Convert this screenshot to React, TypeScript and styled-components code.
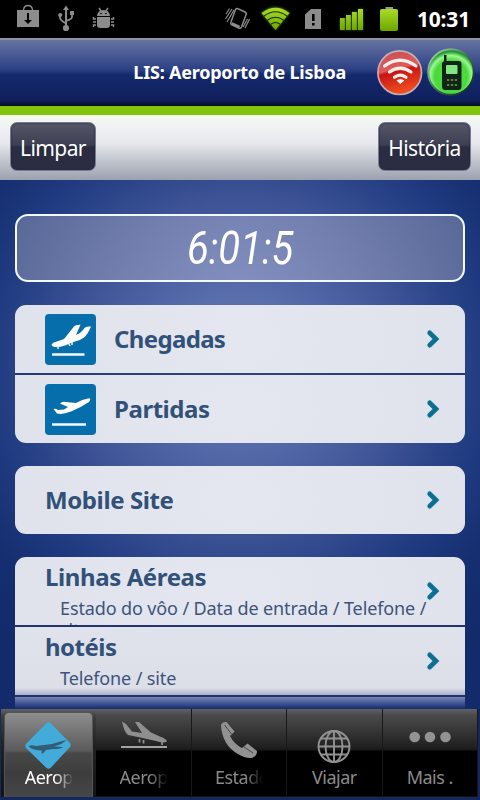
import React from "react";
import styled, { createGlobalStyle, css } from "styled-components";

const GlobalStyle = createGlobalStyle`
  * { box-sizing: border-box; }
  body { margin: 0; background: #13286a; }
`;

const Screen = styled.div`
  width: 480px;
  height: 800px;
  display: flex;
  flex-direction: column;
  overflow: hidden;
  font-family: "Noto Sans", "Open Sans", sans-serif;
  background: radial-gradient(circle at 240px 365px, #6779b5 0, #5b6fad 65px, #4e64a4 105px, #3f5597 160px, #2b4489 215px, #1f3a80 250px, #152f70 300px, #132a6b 360px);
`;

const StatusBar = styled.header`
  flex: none;
  height: 38px;
  background: #000;
  display: flex;
  justify-content: space-between;
  svg { display: block; }
`;

const Clock = styled.span`
  width: 63px;
  padding-top: 6px;
  color: #fff;
  font-size: 21px;
  line-height: 27px;
  font-weight: 700;
  letter-spacing: -0.2px;
`;

const StatusRight = styled.div`
  display: flex;
`;

const TitleBar = styled.div`
  flex: none;
  height: 77px;
  display: flex;
  align-items: center;
  justify-content: flex-end;
  padding: 0 5px 3px 0;
  border-top: 2px solid #8d91a3;
  border-bottom: 9px solid #82c40c;
  background: linear-gradient(#66739f 0, #4f5f96 12px, #2b3f83 30px, #14296c 35px, #10205d 60px, #0b1742 63px, #02101a 66px);
`;

const Title = styled.h1`
  margin: 1px 29px 0 0;
  color: #fff;
  font-size: 18px;
  line-height: 24px;
  font-weight: 700;
  letter-spacing: -0.22px;
  white-space: nowrap;
`;

const Toolbar = styled.div`
  flex: none;
  height: 65px;
  display: flex;
  justify-content: space-between;
  padding: 7px 9px 0 10px;
  background: linear-gradient(#f6faee 0, #eff1f4 12px, #e6e8ed 28px, #c9cdd4 42px, #9ba1ae 100%);
`;

const ToolButton = styled.button<{ $width: number }>`
  width: ${(p) => p.$width}px;
  height: 49px;
  padding: 2px 0 0;
  border: 1px solid #777c90;
  border-radius: 7px;
  background: linear-gradient(#555668 0, #3d3f52 22px, #2a2c40 24px, #2b2d42 100%);
  box-shadow: inset 0 0 2px #22243a;
  color: #fff;
  font-family: inherit;
  font-size: 21px;
  line-height: 28px;
  letter-spacing: -0.6px;
`;

const Content = styled.main`
  flex: none;
  height: 529px;
  padding: 34px 15px 0;
  overflow: hidden;
`;

const TimePanel = styled.div`
  height: 68px;
  margin-bottom: 23px;
  display: flex;
  justify-content: center;
  align-items: center;
  border: 2px solid #f4f8ff;
  border-radius: 13px;
  background: linear-gradient(90deg, rgba(174, 174, 190, 0.42), rgba(190, 192, 218, 0.42) 50%, rgba(174, 174, 190, 0.42));
`;

const Digits = styled.time`
  color: #fff;
  font-family: Roboto, sans-serif;
  font-style: italic;
  font-weight: 400;
  font-size: 46px;
  line-height: 64px;
  transform: scaleX(0.87);
`;

const Card = styled.section<{ $open?: boolean }>`
  display: flex;
  flex-direction: column;
  gap: 2px;
  margin-bottom: 23px;
  border-radius: ${(p) => (p.$open ? "11px 11px 0 0" : "11px")};
  overflow: hidden;
  background: rgba(37, 54, 112, 0.8);
`;

const Row = styled.div<{ $fade?: boolean }>`
  height: 68px;
  display: flex;
  align-items: center;
  padding: 0 25px 0 30px;
  overflow: hidden;
  background: ${(p) =>
    p.$fade
      ? "linear-gradient(#e0e3ec 0, #dcdfe8 61px, #a8b0cb 68px)"
      : "radial-gradient(ellipse 320px 200px at 50% 50%, #e5e7f0, #dfe1ea)"};
`;

const CutRow = styled.div`
  height: 12px;
  background: linear-gradient(#7885b3, #2a4186 9px, #182b68);
`;

const RowIcon = styled.svg`
  flex: none;
  width: 51px;
  height: 51px;
  margin-right: 18px;
  display: block;
`;

const Label = styled.h2<{ $space: number }>`
  flex: 1;
  margin: 0;
  color: #315178;
  font-size: 24px;
  line-height: 32px;
  font-weight: 700;
  letter-spacing: ${(p) => p.$space}px;
  white-space: nowrap;
`;

const Stack = styled.div`
  flex: 1;
  min-width: 0;
  height: 68px;
  padding-top: 4px;
`;

const Detail = styled.p`
  width: 371px;
  margin: 4px 0 0 15px;
  color: #3c547b;
  font-size: 18px;
  line-height: 22px;
  letter-spacing: -0.12px;
`;

const Arrow = styled.svg`
  flex: none;
  width: 14px;
  height: 20px;
  margin: 0 0 1px auto;
`;

const TabBar = styled.nav`
  flex: none;
  height: 91px;
  display: flex;
  padding: 0 2px 3px 1px;
  background: #14275e;
`;

const Tab = styled.div<{ $active?: boolean }>`
  flex: none;
  width: 20%;
  display: flex;
  flex-direction: column;
  align-items: center;
  color: #8b8b8b;
  background: linear-gradient(#5f6165 0, #4b4b4b 6px, #202020 38px, #191919 41px, #000 42px);
  border-right: 1px solid #181818;
  border-bottom: 1px solid #171006;
  ${(p) =>
    p.$active &&
    css`
      color: #fff;
      padding: 3px 3px 0;
      border: 0;
      background: linear-gradient(#5f6165 0, #3c3c3c 8px, #202020 38px, #141414);
    `}
`;

const TabFace = styled.div<{ $active?: boolean }>`
  width: 100%;
  height: 100%;
  display: flex;
  flex-direction: column;
  align-items: center;
  ${(p) =>
    p.$active
      ? css`
          border: 1px solid #555;
          border-bottom: 0;
          border-radius: 5px 5px 0 0;
          background: linear-gradient(#8e8e8e, #5a5a5a 38px, #484848 40px, #3d3d3d 60px, #464646);
        `
      : css`
          padding-top: 4px;
        `}
`;

const TabIcon = styled.svg`
  flex: none;
  width: 50px;
  height: 50px;
  display: block;
  overflow: visible;
`;

const TabLabel = styled.span<{ $clip?: boolean }>`
  width: 48px;
  margin-top: 1px;
  overflow: hidden;
  position: relative;
  text-align: ${(p) => (p.$clip ? "left" : "center")};
  white-space: nowrap;
  font-size: 18px;
  line-height: 26px;
  letter-spacing: -0.5px;
  ${(p) => p.$clip && "mask-image: linear-gradient(90deg, #000 62%, transparent);"}
`;

const Badge = styled.svg`
  width: 49px;
  height: 50px;
  display: block;
  & + & {
    margin-left: 2px;
  }
`;

const Chevron = () => (
  <Arrow viewBox="0 0 14 20">
    <path d="M3.7 3.8 L10.3 10 L3.7 16.2" fill="none" stroke="#86d5e6" strokeWidth="5.8" strokeLinecap="round" strokeLinejoin="round" opacity=".5" />
    <path d="M3.7 3.8 L10 10 L3.7 16.2" fill="none" stroke="#0d6e90" strokeWidth="4.6" strokeLinecap="round" />
  </Arrow>
);

const Notifications = () => (
  <svg width="125" height="38" viewBox="0 0 125 38">
    <g fill="#8c8c8c">
      <path d="M17 10H39V27H17Z" />
      <path d="M23.5 10Q24 5.5 28 5.5T32.5 10" fill="none" stroke="#8c8c8c" strokeWidth="1.3" />
      <path d="M27 13h2v7h3l-4 4-4-4h3Z" fill="#000" />
      <path d="M66 5.5l3 4.500h-2v16h-2V10h-2Z" />
      <circle cx="66" cy="28" r="3.1" />
      <circle cx="60.2" cy="15" r="2.1" />
      <path d="M70 11h4v4h-4Z" />
      <path d="M60 15v3q0 2 6 5.4M72 14v3q0 2-6 4" fill="none" stroke="#8c8c8c" strokeWidth="1.8" />
      <path d="M97 16Q97.500 10 103.500 10T110 16Z" />
      <path d="M97 17h13v8q0 3-3.500 3h-6q-3.500 0-3.500-3Z" />
      <path d="M101 11l-2-3M106 11l2-3M96 19h-2.500v-2M96 22h-3M96 25h-2.500v2M111 19h2.500v-2M111 22h3M111 25h2.500v2" fill="none" stroke="#8c8c8c" strokeWidth="1.5" />
      <circle cx="101" cy="13.500" r=".8" fill="#000" />
      <circle cx="106" cy="13.500" r=".8" fill="#000" />
    </g>
  </svg>
);

const Signals = () => (
  <svg width="195" height="38" viewBox="222 0 195 38">
    <defs>
      <linearGradient id="lime" x1="0" y1="0" x2="0" y2="1">
        <stop stopColor="#a9dc28" />
        <stop offset="1" stopColor="#6ba600" />
      </linearGradient>
      <filter id="glow" x="-30%" y="-30%" width="160%" height="160%">
        <feGaussianBlur stdDeviation="1.2" />
      </filter>
    </defs>
    <g fill="none" stroke="#8c8c8c">
      <path d="M235.500 9.500Q236.500 7.800 238.500 9L245 12Q246.800 13 246 14.800L241.500 27Q240.700 29 238.800 28L232.300 25Q230 24 231 22Z" strokeWidth="1.500" />
      <path d="M231.500 23.500l8 3.500" strokeWidth="3" />
      <path d="M226 14l3.500-5.500M225.500 19l6.500-10M227 22l7-12M243 27l4.500-8M245 28l4.500-9" strokeWidth="1.200" />
    </g>
    <path d="M261 13Q275.500 1 290 13L275.500 30Z" fill="#69a800" filter="url(#glow)" opacity=".7" />
    <path d="M261.500 13Q275.500 2.500 289.500 13L275.500 30Z" fill="url(#lime)" />
    <g fill="none" stroke="#182d00" strokeWidth="1.100">
      <path d="M263.500 16.500Q275.500 7 287.500 16.500M267 20.500Q275.500 14 284 20.500M270.500 24.500Q275.500 20.500 280.500 24.500" />
    </g>
    <path d="M305 14.500L311 9H321V29H305Z" fill="#8c8c8c" />
    <path d="M312 14h2.600v7H312ZM312 23h2.600v2.500H312Z" fill="#000" />
    <path d="M340 19h5v11h-5zM346 16h5v14h-5zM352 12h5v18h-5zM358 9h5v21h-5z" fill="#69a800" filter="url(#glow)" opacity=".6" />
    <path d="M340 18h4.800v12H340zM346 15h4.800v15H346zM352 12h4.800v18H352zM358 9h5v21h-5z" fill="url(#lime)" />
    <rect x="385.500" y="7" width="7.500" height="4" fill="#999" />
    <rect x="380" y="9" width="18" height="22" rx="2" fill="url(#lime)" />
  </svg>
);

const WifiBadge = () => (
  <Badge viewBox="375 46 49 50">
    <defs>
      <linearGradient id="red" x1="0" y1="0" x2="0.250" y2="1">
        <stop stopColor="#c44f56" />
        <stop offset=".48" stopColor="#e05a55" />
        <stop offset=".54" stopColor="#c91313" />
        <stop offset="1" stopColor="#ee4c1f" />
      </linearGradient>
    </defs>
    <circle cx="399.700" cy="71.700" r="21.800" fill="url(#red)" stroke="#c4aeb9" strokeWidth="1.700" />
    <g fill="none" stroke="#fff0ec" strokeWidth="3.200" strokeLinecap="round">
      <path d="M384.500 65Q400 53.500 416 65M389.500 71Q400 63.500 411 71M394.500 76.300Q400 72 406 76.300" />
    </g>
    <path d="M396.500 79.500Q400.500 77 404.300 79.500L400.300 83Z" fill="#fff" />
  </Badge>
);

const PhoneBadge = () => (
  <Badge viewBox="426 46 49 50">
    <defs>
      <radialGradient id="green" cx=".5" cy=".6" r=".55">
        <stop stopColor="#55e33a" />
        <stop offset=".65" stopColor="#4bd83b" />
        <stop offset=".84" stopColor="#9af891" />
        <stop offset="1" stopColor="#1c982a" />
      </radialGradient>
      <linearGradient id="rim" x1="0" y1="0" x2="1" y2="1">
        <stop stopColor="#b7dfc1" />
        <stop offset=".5" stopColor="#3c7654" />
        <stop offset="1" stopColor="#061c27" />
      </linearGradient>
    </defs>
    <circle cx="451" cy="71" r="22.800" fill="url(#green)" stroke="url(#rim)" strokeWidth="2" />
    <path d="M444 54h2.500v6h12.500q2.500 0 2.500 3v22q0 4-3 4H445q-3 0-3-4V62l2-2Z" fill="#10241b" />
    <rect x="446" y="64" width="11.500" height="9" rx="1" fill="#82e783" />
    <path d="M447 79h10M447 84h10" stroke="#73a83b" strokeWidth="1.600" strokeDasharray="2.300 1.600" />
  </Badge>
);

const LandingIcon = () => (
  <RowIcon viewBox="0 0 51 51">
    <rect width="51" height="51" rx="4" fill="#066eaa" />
    <path d="M6.500 30.500Q8 28 12 27.500L19 25L29 12.500Q30.500 10.500 35.500 10.700L31 21Q35 20 37.500 16.500L40 13.500Q42.500 12 46 12.500Q43 20 39 23.500Q36 26 30 27.500L20 31.500Q12 34 8 32.500Q6.500 31.500 6.500 30.500Z" fill="#fff" />
    <path d="M13 32v3M24 30l1 2M27 28v3" stroke="#e6f2fa" strokeWidth="1.500" />
    <path d="M7 40.500H39.500" stroke="#f5fbff" strokeWidth="2.400" />
  </RowIcon>
);

const TakeoffIcon = () => (
  <RowIcon viewBox="0 0 51 51">
    <rect width="51" height="51" rx="4" fill="#066eaa" />
    <path d="M8.500 25Q10.500 24 13 26L19 25.500L23 23L15 19.500Q17 17 21 18L31 19Q37 15.500 44 14.300Q46.500 15 44 18Q35 24 26 27.500Q17 31 12 29.500Z" fill="#fff" />
    <path d="M7 40.500H41" stroke="#f5fbff" strokeWidth="2.400" />
  </RowIcon>
);

const DiamondPlane = () => (
  <TabIcon viewBox="24 713 50 50">
    <path d="M46.500 723Q48.500 721.500 50.500 723L70 743Q71.500 745 70 747L50.500 768Q48.500 769.500 46.500 768L26 748Q24.500 746 26 744Z" fill="#43abd9" />
    <path d="M28.500 746.500Q31 744.500 36 746L52 744Q60 741.500 66.500 740Q62 744.500 54 746.500L63 747Q61 749 53 749L46 750L43 753.500H41.500L41.800 750.500Q33 750.500 28.500 746.500Z" fill="#315e76" />
  </TabIcon>
);

const PlaneTab = () => (
  <TabIcon viewBox="118 713 50 50">
    <path d="M121 721.500L125 724L131 731.500L141 733L134 722L138 722L150 732.500L160 737Q165 738.500 166 741.500Q162 743.500 155 741L137 737L127 735Q123 732 121 721.500Z" fill="#8e8e8e" />
    <path d="M138.500 739v3.500M142.500 740v3.500M161 741v4" stroke="#8e8e8e" strokeWidth="1.800" />
    <path d="M120 747H166" stroke="#a4a4a4" strokeWidth="2" />
  </TabIcon>
);

const HandsetTab = () => (
  <TabIcon viewBox="214 713 50 50">
    <path d="M221 725Q222.500 721.500 226.500 722L234.500 731.500L230 736Q234 744 242 748L247.500 743.500L257 751Q257 756 252.500 757.800Q246 759 238 754Q222 745 221 725Z" fill="#929292" />
    <path d="M224.500 725l7 9M244 747l9 6" stroke="#464646" strokeWidth="1" />
  </TabIcon>
);

const GlobeTab = () => (
  <TabIcon viewBox="310 713 50 50">
    <g fill="none" stroke="#929292" strokeWidth="1.900">
      <circle cx="335" cy="746.500" r="15.500" />
      <ellipse cx="335" cy="746.500" rx="8.500" ry="15.500" />
      <path d="M335 731v31M319.500 746.500h31M322 738.500h26M322 754.500h26" />
    </g>
  </TabIcon>
);

const MoreTab = () => (
  <TabIcon viewBox="405 713 50 50">
    <g fill="#929292">
      <circle cx="414.700" cy="737" r="5.300" />
      <circle cx="430" cy="737" r="5.300" />
      <circle cx="445.500" cy="737" r="5.300" />
    </g>
  </TabIcon>
);

const tabs = [
  { label: "Aerop", clip: true, Icon: DiamondPlane, active: true },
  { label: "Aerop", clip: true, Icon: PlaneTab },
  { label: "Estado", clip: true, Icon: HandsetTab },
  { label: "Viajar", clip: false, Icon: GlobeTab },
  { label: "Mais .", clip: false, Icon: MoreTab },
];

export default function App() {
  return (
    <>
      <GlobalStyle />
      <Screen>
        <StatusBar>
          <Notifications />
          <StatusRight>
            <Signals />
            <Clock>10:31</Clock>
          </StatusRight>
        </StatusBar>
        <TitleBar>
          <Title>LIS: Aeroporto de Lisboa</Title>
          <WifiBadge />
          <PhoneBadge />
        </TitleBar>
        <Toolbar>
          <ToolButton $width={86}>Limpar</ToolButton>
          <ToolButton $width={93}>História</ToolButton>
        </Toolbar>
        <Content>
          <TimePanel>
            <Digits>6:01:5</Digits>
          </TimePanel>
          <Card>
            <Row>
              <LandingIcon />
              <Label $space={-0.65}>Chegadas</Label>
              <Chevron />
            </Row>
            <Row>
              <TakeoffIcon />
              <Label $space={-0.45}>Partidas</Label>
              <Chevron />
            </Row>
          </Card>
          <Card>
            <Row>
              <Label $space={-0.4}>Mobile Site</Label>
              <Chevron />
            </Row>
          </Card>
          <Card $open>
            <Row>
              <Stack>
                <Label $space={-0.4}>Linhas Aéreas</Label>
                <Detail>Estado do vôo / Data de entrada / Telefone / site</Detail>
              </Stack>
              <Chevron />
            </Row>
            <Row $fade>
              <Stack>
                <Label $space={-0.5}>hotéis</Label>
                <Detail>Telefone / site</Detail>
              </Stack>
              <Chevron />
            </Row>
            <CutRow />
          </Card>
        </Content>
        <TabBar>
          {tabs.map(({ label, clip, Icon, active }, i) => (
            <Tab key={i} $active={active}>
              <TabFace $active={active}>
                <Icon />
                <TabLabel $clip={clip}>{label}</TabLabel>
              </TabFace>
            </Tab>
          ))}
        </TabBar>
      </Screen>
    </>
  );
}
